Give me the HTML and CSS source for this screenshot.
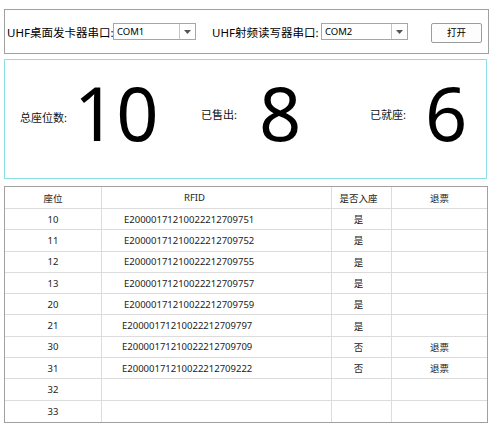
FILE: index.html
```html
<!DOCTYPE html>
<html lang="zh-CN">
<head>
<meta charset="utf-8">
<title>座位管理</title>
<link rel="stylesheet" href="styles.css">
</head>
<body>
<div class="page">
  <div class="ports">
    <span class="port-label port-label-1">UHF桌面发卡器串口:</span>
    <div class="combo combo-1"><span class="combo-text">COM1</span><span class="combo-btn"><svg width="7" height="4" viewBox="0 0 7 4"><path d="M0 0H7L3.5 4Z" fill="#555"/></svg></span></div>
    <span class="port-label port-label-2">UHF射频读写器串口:</span>
    <div class="combo combo-2"><span class="combo-text">COM2</span><span class="combo-btn"><svg width="7" height="4" viewBox="0 0 7 4"><path d="M0 0H7L3.5 4Z" fill="#555"/></svg></span></div>
    <button class="open-btn">打开</button>
  </div>

  <div class="stats">
    <div class="stat stat-1"><span class="stat-label">总座位数:</span><span class="stat-num">10</span></div>
    <div class="stat stat-2"><span class="stat-label">已售出:</span><span class="stat-num">8</span></div>
    <div class="stat stat-3"><span class="stat-label">已就座:</span><span class="stat-num">6</span></div>
  </div>

  <div class="grid">
    <div class="row head">
      <div class="c c1">座位</div><div class="c c2 h-rfid">RFID</div><div class="c c3">是否入座</div><div class="c c4">退票</div>
    </div>
    <div class="row"><div class="c c1">10</div><div class="c c2">E20000171210022212709751</div><div class="c c3">是</div><div class="c c4"></div></div>
    <div class="row"><div class="c c1">11</div><div class="c c2">E20000171210022212709752</div><div class="c c3">是</div><div class="c c4"></div></div>
    <div class="row"><div class="c c1">12</div><div class="c c2">E20000171210022212709755</div><div class="c c3">是</div><div class="c c4"></div></div>
    <div class="row"><div class="c c1">13</div><div class="c c2">E20000171210022212709757</div><div class="c c3">是</div><div class="c c4"></div></div>
    <div class="row"><div class="c c1">20</div><div class="c c2">E20000171210022212709759</div><div class="c c3">是</div><div class="c c4"></div></div>
    <div class="row"><div class="c c1">21</div><div class="c c2 narrow">E20000171210022212709797</div><div class="c c3">是</div><div class="c c4"></div></div>
    <div class="row"><div class="c c1">30</div><div class="c c2 narrow">E20000171210022212709709</div><div class="c c3">否</div><div class="c c4">退票</div></div>
    <div class="row"><div class="c c1">31</div><div class="c c2 narrow">E20000171210022212709222</div><div class="c c3">否</div><div class="c c4">退票</div></div>
    <div class="row"><div class="c c1">32</div><div class="c c2"></div><div class="c c3"></div><div class="c c4"></div></div>
    <div class="row last"><div class="c c1">33</div><div class="c c2"></div><div class="c c3"></div><div class="c c4"></div></div>
  </div>
</div>
</body>
</html>
```

FILE: styles.css
```css
* { box-sizing: border-box; }
html, body { margin: 0; padding: 0; background: #fff; }
body {
  font-family: "Noto Sans", "Noto Sans CJK SC", sans-serif;
  color: #000;
}
.page {
  padding: 9px 0 0 4px;
  display: flex;
  flex-direction: column;
}

/* top port selector group */
.ports {
  width: 485px;
  height: 45px;
  border: 1px solid #a0a0a0;
  display: flex;
  align-items: center;
  padding-left: 2px;
}
.port-label {
  font-size: 11.5px;
  white-space: nowrap;
  color: #000;
}
.port-label-1 { width: 106px; }
.port-label-2 { width: 109px; margin-left: 16px; }
.combo {
  height: 17px;
  border: 1px solid #a6a6a6;
  display: flex;
  align-items: stretch;
  background: #fff;
}
.combo-1 { width: 83px; }
.combo-2 { width: 87px; }
.combo-text {
  flex: 1;
  font-size: 9.5px;
  line-height: 15px;
  padding-left: 3px;
  color: #000;
}
.combo-btn {
  width: 16px;
  border-left: 1px solid #c4c4c4;
  display: flex;
  align-items: center;
  justify-content: center;
}
.open-btn {
  margin-left: 23px;
  width: 51px;
  height: 20px;
  border: 1px solid #9c9c9c;
  border-radius: 2px;
  background: #fdfdfd;
  font-family: "Noto Sans CJK SC", sans-serif;
  font-size: 9.5px;
  line-height: 1;
  padding: 0;
  color: #000;
  margin-top: 3px;
}

/* stats box */
.stats {
  margin-top: 5px;
  width: 483px;
  height: 120px;
  border: 1px solid #8adfe5;
  display: flex;
  align-items: center;
  padding-left: 15px;
  padding-bottom: 12px;
}
.stat { display: flex; align-items: center; }
.stat-1 { width: 181px; }
.stat-2 { width: 169px; }
.stat-label {
  font-size: 11px;
  line-height: 13px;
  white-space: nowrap;
  color: #111;
}
.stat-1 .stat-label { width: 54px; margin-top: 8px; }
.stat-2 .stat-label { width: 58px; margin-top: 2px; }
.stat-3 .stat-label { width: 55px; margin-top: 2px; }
.stat-num {
  font-size: 74px;
  line-height: 74px;
  color: #000;
}

/* data grid */
.grid {
  margin-top: 7px;
  width: 484px;
  border: 1px solid #a0a0a0;
  display: flex;
  flex-direction: column;
  font-size: 9.5px;
  color: #222;
}
.row {
  display: flex;
  height: 21.3px;
  border-bottom: 1px solid #dcdcdc;
}
.row.head { height: 22px; }
.row.last { border-bottom: none; }
.c {
  display: flex;
  align-items: center;
  justify-content: center;
  border-right: 1px solid #dcdcdc;
  white-space: nowrap;
  overflow: hidden;
}
.c1 { width: 97px; }
.c2 { width: 230px; justify-content: flex-start; padding-left: 22px; }
.c2.narrow { padding-left: 20px; }
.c2.h-rfid { justify-content: center; padding-left: 0; padding-right: 44px; }
.c3 { width: 60px; padding-right: 6px; }
.c4 { width: 95px; border-right: none; }
```
